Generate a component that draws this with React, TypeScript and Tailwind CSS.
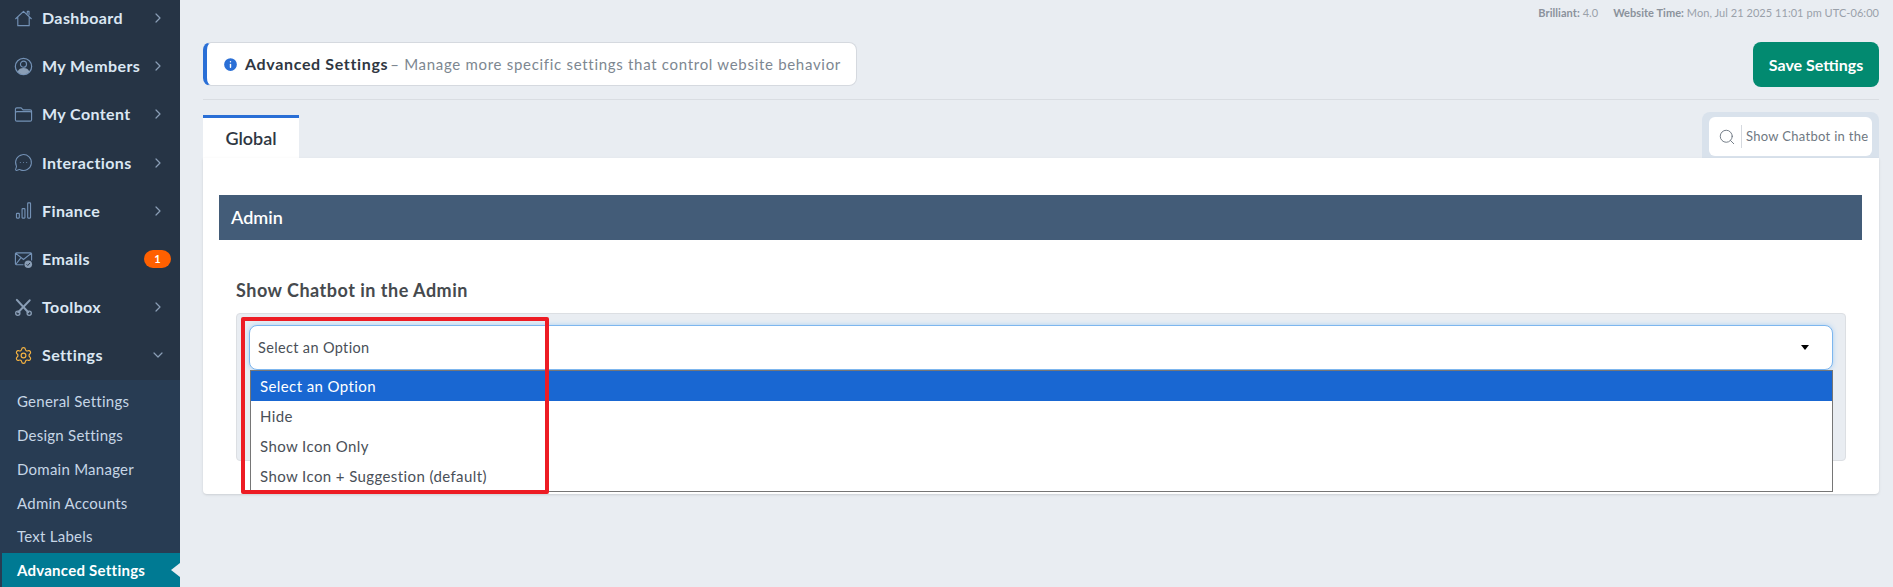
import { ChevronDown, ChevronRight, Info, MessageCircleMore, Search, Settings } from "lucide-react";
import type { ReactNode } from "react";

const font = "[font-family:Lato,'Noto_Sans',sans-serif]";

const HouseIcon = () => (
  <svg viewBox="0 0 20 20" className="w-[19px] h-[19px]" fill="none" stroke="#7391b5" strokeWidth="1.2" strokeLinejoin="round">
    <path d="M1.500 10.500L10 2.500l8.500 8M4 8.500v9h12v-9M14 5V2.500h1.800v4.200" />
  </svg>
);

const MembersIcon = () => (
  <svg viewBox="0 0 20 20" className="w-[19px] h-[19px]">
    <circle cx="10" cy="10" r="8.6" fill="none" stroke="#7391b5" strokeWidth="1.3" />
    <circle cx="10" cy="7.600" r="3.200" fill="none" stroke="#7391b5" strokeWidth="1.2" />
    <path d="M3.800 15.600c1-3 3.400-4 6.200-4s5.200 1 6.200 4a8.400 8.400 0 0 1-12.400 0z" fill="#8a9eb6" />
  </svg>
);

const FolderIcon = () => (
  <svg viewBox="0 0 20 20" className="w-[19px] h-[19px]" fill="none" stroke="#7391b5" strokeWidth="1.2" strokeLinejoin="round">
    <path d="M1.500 15.500V4.500a1.500 1.500 0 0 1 1.500-1.500h4.500l2 2.200H17a1.500 1.500 0 0 1 1.500 1.500v8.800A1.500 1.500 0 0 1 17 17H3a1.500 1.500 0 0 1-1.500-1.500zM1.500 8.500c0-1 .7-1.500 1.500-1.500h14c.8 0 1.500.5 1.500 1.500" />
  </svg>
);

const BarsIcon = () => (
  <svg viewBox="0 0 20 20" className="w-[19px] h-[19px]" fill="none" stroke="#7391b5" strokeWidth="1.2">
    <rect x="2.600" y="13" width="3" height="5" rx="0.6" />
    <rect x="8.500" y="8" width="3" height="10" rx="0.6" />
    <rect x="14.400" y="2" width="3" height="16" rx="0.6" />
  </svg>
);

const MailIcon = () => (
  <svg viewBox="0 0 20 20" className="w-[19px] h-[19px]">
    <path d="M10 15.500H2.500a1 1 0 0 1-1-1V4a1 1 0 0 1 1-1h15a1 1 0 0 1 1 1v7M2 3.600l8 6.400 8-6.400M2 15l5-6.500" fill="none" stroke="#7391b5" strokeWidth="1.200" />
    <circle cx="15" cy="15" r="4" fill="#8a9eb6" />
    <path d="M13.200 15l1.300 1.300 2.300-2.600" fill="none" stroke="#263445" strokeWidth="1" />
  </svg>
);

const ToolsIcon = () => (
  <svg viewBox="0 0 20 20" className="w-[19px] h-[19px]" fill="none" stroke="#8a9eb6" strokeWidth="2.200" strokeLinecap="round">
    <path d="M3 2l12 13" />
    <path d="M16.500 2.500L4.500 15" />
    <circle cx="4" cy="16" r="2.200" strokeWidth="1.400" />
    <circle cx="16" cy="16" r="2.200" strokeWidth="1.400" />
  </svg>
);

const navItems: { label: string; icon: ReactNode }[] = [
  { label: "Dashboard", icon: <HouseIcon /> },
  { label: "My Members", icon: <MembersIcon /> },
  { label: "My Content", icon: <FolderIcon /> },
  { label: "Interactions", icon: <MessageCircleMore size={19} strokeWidth={1.3} color="#7391b5" /> },
  { label: "Finance", icon: <BarsIcon /> },
  { label: "Emails", icon: <MailIcon /> },
  { label: "Toolbox", icon: <ToolsIcon /> },
];

const subItems = ["General Settings", "Design Settings", "Domain Manager", "Admin Accounts", "Text Labels"];
const options = ["Hide", "Show Icon Only", "Show Icon + Suggestion (default)"];

const Sidebar = () => (
  <aside className="w-[180px] shrink-0 h-[587px] overflow-hidden bg-[#263445] flex flex-col">
    <div className="-mt-[6px]">
      {navItems.map((item) => (
        <div key={item.label} className="h-[48.2px] pl-[14px] pr-[9px] flex items-center">
          <span className="w-[19px] flex justify-center">{item.icon}</span>
          <span className="ml-[9px] flex-1 text-[16px] font-bold tracking-[0.4px] text-[#dbe7f3]">{item.label}</span>
          {item.label === "Emails" ? (
            <span className="w-[27px] h-[18px] rounded-full bg-[#ff6000] text-white text-[11px] font-bold flex items-center justify-center">1</span>
          ) : (
            <ChevronRight size={16} strokeWidth={1.8} color="#8a9eb6" className="mr-[5px]" />
          )}
        </div>
      ))}
      <div className="h-[48.200px] pl-[14px] pr-[9px] flex items-center">
        <Settings size={19} strokeWidth={1.5} color="#f5b342" />
        <span className="ml-[9px] flex-1 text-[16px] font-bold tracking-[0.4px] text-[#dbe7f3]">Settings</span>
        <ChevronDown size={16} strokeWidth={1.8} color="#8a9eb6" className="mr-[5px]" />
      </div>
    </div>
    <div className="bg-[#283c53] flex-1 flex flex-col pt-[5px]">
      {subItems.map((s) => (
        <div key={s} className="h-[33.800px] pl-[17px] flex items-center text-[15px] tracking-[0.25px] text-[#c6d6e6]">{s}</div>
      ))}
      <div className="h-[34px] ml-[2px] pl-[15px] flex items-center bg-[#007a93] relative text-[15px] font-bold tracking-[0.25px] text-white">
        Advanced Settings
        <span className="absolute right-0 top-[10px] border-y-[7px] border-y-transparent border-r-[9px] border-r-[#e9edf2]" />
      </div>
    </div>
  </aside>
);

const Main = () => (
  <main className="flex-1 min-w-0 pl-[23px] pr-[14px] flex flex-col">
    <div className="h-[26px] flex items-center justify-end gap-[15px] text-[11px] tracking-[0.05px] text-[#9aa1aa]">
      <span><b className="font-bold text-[#8b929c]">Brilliant:</b> 4.0</span>
      <span><b className="font-bold text-[#8b929c]">Website Time:</b> Mon, Jul 21 2025 11:01 pm UTC-06:00</span>
    </div>
    <div className="mt-[16px] flex items-start justify-between">
      <div className="w-[654px] h-[44px] bg-white rounded-[8px] border border-[#d5d9df] border-l-[4px] border-l-[#2a6fd6] flex items-center pl-[15px]">
        <Info size={17} fill="#2a6fd6" color="#fff" strokeWidth={2} />
        <span className="ml-[6px] text-[16px] font-bold tracking-[0.65px] text-[#2f3742]">Advanced Settings</span>
        <span className="ml-[2px] text-[15px] tracking-[0.7px] text-[#7d8791]">– Manage more specific settings that control website behavior</span>
      </div>
      <button className="w-[126px] h-[45px] rounded-[8px] bg-[#028a70] text-white text-[16px] font-bold">Save Settings</button>
    </div>
    <div className="mt-[12px] h-px bg-[#d9dde2]" />
    <div className="mt-[12px] h-[46px] flex items-end justify-between">
      <div className="w-[96px] h-[43px] bg-white border-t-[3px] border-t-[#2a6fd6] flex items-center justify-center text-[18px] font-semibold text-[#2f3742]">Global</div>
      <div className="w-[177px] h-[46px] bg-[#d9e2ec] rounded-t-[8px] px-[7px] pt-[5px]">
        <div className="h-[39px] bg-white rounded-[6px] flex items-center pl-[9px]">
          <Search size={18} strokeWidth={1.2} color="#68727d" />
          <span className="ml-[5px] h-[23px] w-px bg-[#d5d9df]" />
          <span className="ml-[4px] text-[13px] tracking-[0.3px] text-[#6f7882] whitespace-nowrap overflow-hidden">Show Chatbot in the</span>
        </div>
      </div>
    </div>
    <div className="h-[336px] bg-white rounded-b-[4px] shadow-sm pl-[16px] pr-[17px] pt-[37px] relative">
      <div className="h-[45px] bg-[#435c78] flex items-center pl-[12px] text-[18px] font-semibold text-white">Admin</div>
      <div className="mt-[38px] ml-[17px] mr-[16px]">
        <div className="text-[18px] font-bold leading-[24px] tracking-[0.5px] text-[#464a4e]">Show Chatbot in the Admin</div>
        <div className="mt-[11px] h-[148px] bg-[#e9edf2] border border-[#dcdfe3] rounded-[4px] px-[12px] pt-[11px] relative">
          <div className="h-[45px] bg-white border border-[#7db6ee] rounded-[8px] shadow-[0_0_5px_#a9d0f5] pl-[8px] pr-[23px] flex items-center justify-between text-[14.500px] tracking-[0.35px] text-[#4a5058]">
            Select an Option
            <span className="border-x-[4px] border-x-transparent border-t-[5px] border-t-black" />
          </div>
          <div className="absolute left-[13px] right-[12px] top-[56px] bg-white border border-[#767676] text-[15px] tracking-[0.4px] text-[#4a5058]">
            <div className="h-[30px] pl-[9px] flex items-center bg-[#1967d2] text-white">Select an Option</div>
            {options.map((o) => (
              <div key={o} className="h-[30px] pl-[9px] flex items-center">{o}</div>
            ))}
          </div>
        </div>
      </div>
      {/* red annotation drawn over the open dropdown */}
      <div className="absolute left-[38px] top-[159px] w-[308px] h-[177px] border-[4px] border-[#ed1c24] rounded-[2px]" />
    </div>
  </main>
);

export default function App() {
  return (
    <div className={`w-[1893px] h-[587px] overflow-hidden flex bg-[#e9edf2] ${font}`}>
      <Sidebar />
      <Main />
    </div>
  );
}
